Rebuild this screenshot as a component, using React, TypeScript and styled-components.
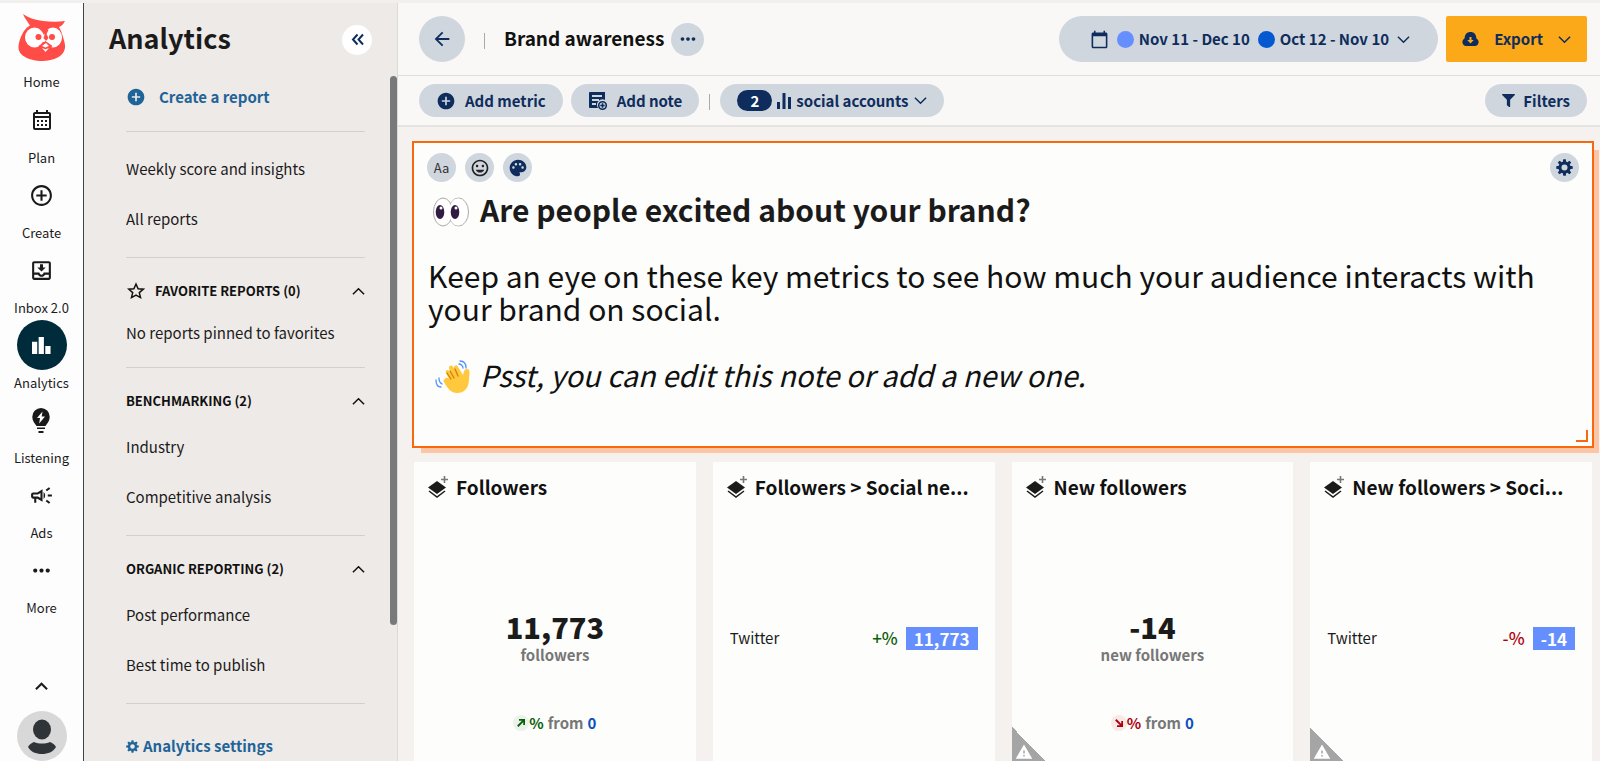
import React from "react";
import styled, { createGlobalStyle } from "styled-components";
import {
  MdOutlineCalendarMonth,
  MdOutlineAddCircleOutline,
  MdOutlineMoveToInbox,
  MdOutlineCampaign,
  MdMoreHoriz,
  MdAddCircle,
  MdPalette,
  MdOutlineInsertEmoticon,
  MdCalendarToday,
  MdArrowBack,
  MdWarning,
} from "react-icons/md";
import { FaFilter } from "react-icons/fa";

const navy = "#0f2d5c";
const pill = "#cfd6de";

const GlobalStyle = createGlobalStyle`
  *, *::before, *::after { box-sizing: border-box; }
  body {
    margin: 0;
    color: #1c1b1c;
    background: #f5f1ee;
    font-family: "Noto Sans CJK SC", "Open Sans", sans-serif;
    font-size: 15px;
    line-height: 24px;
  }
  button { font: inherit; color: inherit; border: 0; padding: 0; cursor: pointer; background: none; }
  a { color: inherit; text-decoration: none; }
  h1, h2, h3, p, ul { margin: 0; padding: 0; font-size: inherit; }
  ul { list-style: none; }
  svg { display: block; flex: none; }
`;

const Page = styled.div`
  display: flex;
  height: 100vh;
  min-height: 740px;
  overflow: hidden;
  border-top: 3px solid #f1f0ef;
`;

/* Icon rail */
const Rail = styled.nav`
  flex: none;
  display: flex;
  flex-direction: column;
  align-items: center;
  width: 84px;
  padding-top: 10px;
  background: #fdfdfd;
  border-right: 1px solid #444;
  font-size: 13px;
`;
const RailLink = styled.a`
  display: flex;
  flex-direction: column;
  align-items: center;
`;
const RailIcon = styled.span<{ $active?: boolean }>`
  display: flex;
  align-items: center;
  justify-content: center;
  width: 50px;
  height: 50px;
  border-radius: 50%;
  color: ${(p) => (p.$active ? "#fff" : "#1a1a1a")};
  background: ${(p) => (p.$active ? "#002b3a" : "transparent")};
`;
const RailLabel = styled.span`
  line-height: 25px;
`;
const HomeLabel = styled(RailLabel)`
  padding: 8px 0 1px;
`;
const RailFoot = styled.div`
  display: flex;
  flex-direction: column;
  align-items: center;
  gap: 18px;
  margin-top: 60px;
`;
const IconButton = styled.button`
  display: flex;
  align-items: center;
  justify-content: center;
`;

/* Sidebar */
const Side = styled.aside`
  position: relative;
  flex: none;
  display: flex;
  flex-direction: column;
  width: 314px;
  padding-left: 25px;
  background: #eeeae7;
  border-right: 1px solid #dcdad8;
`;
const SideHead = styled.div`
  display: flex;
  align-items: center;
  justify-content: space-between;
  height: 73px;
  padding-right: 25px;
`;
const SideTitle = styled.h1`
  padding-bottom: 4px;
  font-size: 27px;
  line-height: 36px;
`;
const Collapse = styled(IconButton)`
  width: 30px;
  height: 30px;
  border-radius: 50%;
  background: #fff;
  color: ${navy};
`;
const SideBody = styled.div`
  padding: 0 32px 0 17px;
`;
const Thumb = styled.div`
  position: absolute;
  top: 73px;
  right: 0;
  width: 7px;
  height: 549px;
  border-radius: 4px;
  background: #77797a;
`;
const CreateLink = styled.a`
  display: flex;
  align-items: center;
  gap: 13px;
  height: 55px;
  padding-bottom: 13px;
  color: #1f6498;
  font-weight: 700;
`;
const Section = styled.section`
  border-top: 1px solid #d3d0cd;
`;
const SectionHead = styled.button`
  display: flex;
  align-items: center;
  gap: 10px;
  width: 100%;
  height: 54px;
  padding-top: 12px;
  color: #111;
  font-size: 13px;
  font-weight: 700;
  text-align: left;
`;
const HeadText = styled.span`
  flex: 1;
`;
const SideItem = styled.a`
  display: flex;
  align-items: center;
  height: 50px;
`;
const TopList = styled.ul`
  padding: 12px 0 13px;
`;
const SideList = styled.ul`
  padding-bottom: 13px;
`;
const EmptyText = styled.p`
  padding: 9px 0 22px;
`;
const SettingsLink = styled.a`
  display: flex;
  align-items: center;
  gap: 4px;
  padding-top: 30px;
  color: #1f6498;
  font-weight: 700;
`;

/* Main column */
const Main = styled.main`
  flex: 1;
  min-width: 0;
  display: flex;
  flex-direction: column;
`;
const Header = styled.header`
  display: flex;
  align-items: center;
  height: 73px;
  padding: 0 13px 0 21px;
  background: #f9f8f7;
  border-bottom: 1px solid #dfdedd;
`;
const Toolbar = styled(Header)`
  height: 51px;
  border-bottom: 2px solid #e6e4e3;
`;
const Spacer = styled.div`
  flex: 1;
`;
const Round = styled(IconButton)<{ $size: number }>`
  flex: none;
  width: ${(p) => p.$size}px;
  height: ${(p) => p.$size}px;
  border-radius: 50%;
  background: ${pill};
  color: ${navy};
`;
const Rule = styled.div<{ $gap: number }>`
  width: 1px;
  height: 16px;
  margin: 3px ${(p) => p.$gap}px 0;
  background: #aba9b0;
`;
const ReportTitle = styled.h2`
  margin-right: 7px;
  padding-bottom: 2px;
  color: #111;
  font-size: 19px;
  white-space: nowrap;
`;
const Pill = styled.button<{ $gap?: number }>`
  display: flex;
  align-items: center;
  gap: ${(p) => p.$gap ?? 9}px;
  height: 33px;
  padding: 0 17px;
  border-radius: 17px;
  background: ${pill};
  color: ${navy};
  font-weight: 700;
  white-space: nowrap;
`;
const DatePill = styled(Pill)`
  height: 46px;
  padding: 0 28px 0 31px;
  border-radius: 23px;
`;
const ExportButton = styled(Pill)`
  height: 46px;
  margin-left: 8px;
  padding: 0 16px;
  border-radius: 2px;
  background: #fba919;
`;
const PillGroup = styled.div`
  display: flex;
  gap: 8px;
`;
const DateRange = styled.span`
  display: flex;
  align-items: center;
  gap: 5px;
`;
const Dot = styled.span<{ $color: string }>`
  width: 17px;
  height: 17px;
  border-radius: 50%;
  background: ${(p) => p.$color};
`;
const Count = styled.span`
  width: 35px;
  border-radius: 11px;
  background: ${navy};
  color: #fff;
  line-height: 21px;
`;

/* Dashboard */
const Board = styled.div`
  flex: 1;
  display: flex;
  flex-direction: column;
  gap: 14px;
  padding: 14px 6px 0 14px;
`;
const Note = styled.article`
  position: relative;
  height: 307px;
  padding: 10px 13px;
  border: 2px solid #f7690f;
  background: #fdfdfb;
  box-shadow: 7px 7px 0 -2px #fbc5a6;
  color: #111;
  font-size: 30px;
  line-height: 33px;
`;
const NoteTools = styled.div`
  display: flex;
  gap: 9px;
  height: 40px;
`;
const AaLabel = styled.span`
  font-size: 13px;
  line-height: 29px;
  color: #333;
`;
const NoteTitle = styled.h2`
  display: flex;
  align-items: center;
  gap: 11px;
  height: 33px;
  padding-left: 6px;
  color: #1c1b1c;
`;
const NoteText = styled.p`
  margin: 33px 0;
  padding-left: 1px;
`;
const NoteHint = styled.p`
  display: flex;
  align-items: center;
  gap: 9px;
  height: 33px;
  padding-left: 8px;
  font-size: 29px;
  font-style: italic;
`;
const Emoji = styled.span`
  padding-top: 4px;
`;
const Grip = styled.span`
  position: absolute;
  right: 4px;
  bottom: 4px;
  width: 12px;
  height: 12px;
  border: solid #f7690f;
  border-width: 0 2px 2px 0;
`;
const Cards = styled.div`
  flex: 1;
  display: grid;
  grid-template-columns: repeat(4, minmax(0, 1fr));
  gap: 17px;
  padding: 0 2px;
`;
const Card = styled.article`
  position: relative;
  padding: 12px 14px 0;
  background: #fdfdfb;
`;
const CardHead = styled.header`
  display: flex;
  align-items: center;
  gap: 8px;
  height: 26px;
`;
const CardTitle = styled.h3`
  color: #111;
  font-size: 19px;
  white-space: nowrap;
`;
const Metric = styled.div`
  display: flex;
  flex-direction: column;
  align-items: center;
  padding-top: 109px;
  color: #777;
  font-weight: 700;
`;
const Value = styled.strong`
  color: #1c1b1c;
  font-size: 29px;
  line-height: 34px;
`;
const Unit = styled.span`
  line-height: 24px;
`;
const Change = styled.div`
  display: flex;
  align-items: center;
  gap: 4px;
  margin-top: 44px;
`;
const Trend = styled.span<{ $down?: boolean }>`
  display: flex;
  align-items: center;
  color: ${(p) => (p.$down ? "#b0000f" : "#0b5f0b")};
`;
const TrendIcon = styled.span<{ $down?: boolean }>`
  display: flex;
  padding: 4px;
  border-radius: 50%;
  background: ${(p) => (p.$down ? "#f8e8e8" : "#eaf2ea")};
`;
const Base = styled.span`
  color: #0b50c0;
`;
const Row = styled.div`
  display: flex;
  align-items: center;
  gap: 8px;
  padding: 126px 3px 0;
`;
const Network = styled.span`
  flex: 1;
`;
const Percent = styled.span<{ $down?: boolean }>`
  font-size: 17px;
  font-weight: 500;
  color: ${(p) => (p.$down ? "#b0000f" : "#0b5f0b")};
`;
const Chip = styled.span`
  padding: 0 8px;
  background: #658fff;
  color: #fff;
  font-size: 17px;
  font-weight: 700;
  line-height: 23px;
`;
const Corner = styled.span`
  position: absolute;
  left: 0;
  bottom: 0;
  width: 34px;
  height: 34px;
  background: linear-gradient(45deg, #a5a5a5 50%, transparent 50%);
  color: #fff;
`;
const CornerIcon = styled(MdWarning)`
  margin: 16px 0 0 3px;
`;

/* Drawn icons */
const Chevron = ({ up, size = 13, weight = 1.6 }: { up?: boolean; size?: number; weight?: number }) => (
  <svg width={size} height={size} viewBox="0 0 14 14" fill="none" stroke="currentColor" strokeWidth={weight}>
    <path d={up ? "M1 10 7 4l6 6" : "M1 4l6 6 6-6"} />
  </svg>
);
const Owl = () => (
  <svg width="48" height="48" viewBox="0 0 48 48">
    <path
      fill="#ff4c46"
      d="M5 1c6 4 12 6 20 7 8 1 15 1 22 0-2 4-4 5-6 6 2 3 3 7 4 10 1 4 2.500 7 2 11-1 8-11 13-23 13S1 43 .5 35C.3 29 4 19 9 14.500c1-1 2-1 3-2C10 9 7 6 5 1z"
    />
    <ellipse cx="16.500" cy="24.500" rx="9.500" ry="10" fill="#fff" />
    <ellipse cx="35" cy="24.500" rx="9" ry="10" fill="#fff" />
    <path fill="#ff4c46" d="M22.500 17h8L28 22z" />
    <path fill="#fff" d="M22 22h9v7h-9z" />
    <path fill="#ff4c46" d="M27.500 19l3 6-2.500 3-2.500-3z" />
    <circle cx="20.500" cy="24" r="3" fill="#ff4c46" />
    <circle cx="34" cy="24" r="3" fill="#ff4c46" />
    <path fill="#ff4c46" d="M27.500 28l7 5-7 7-7-7z" />
    <path fill="#fff" d="M28 30l3 3-3.500 1.500L24 33zM24 35l3.500 1.200L31 35l-3.500 4z" />
  </svg>
);
const Bars = ({ size }: { size: number }) => (
  <svg width={size} height={size} viewBox="0 0 20 20" fill="currentColor">
    <path d="M0 6h5.500v13H0zM7 1h5.500v18H7zM14 10.500h5.500V19H14z" />
  </svg>
);
const ThinBars = () => (
  <svg width="14" height="16" viewBox="0 0 14 16" fill="currentColor">
    <path d="M0 9h3v7H0zM5.500 0h3v16h-3zM11 4h3v12h-3z" />
  </svg>
);
const Bulb = () => (
  <svg width="18" height="25" viewBox="0 0 18 25">
    <path fill="currentColor" d="M9 0a8.700 8.700 0 0 1 8.700 8.700c0 4-2 6-4.200 9.300h-9C2.300 14.700.3 12.700.3 8.700A8.700 8.700 0 0 1 9 0zM5 19.500h8V21H5zM6.500 23h5v2h-5z" />
    <path fill="#fff" d="M10.500 3.500 5 10h3l-.8 5.500L13 8.500H9.700z" />
  </svg>
);
const Avatar = () => (
  <svg width="50" height="50" viewBox="0 0 50 50">
    <circle cx="25" cy="25" r="25" fill="#d8d8d8" />
    <ellipse cx="25" cy="18.500" rx="9" ry="10" fill="#2f3439" />
    <path fill="#2f3439" d="M17 31c5 2 11 2 16 0 3 1 5 3 6 5-3 5-8 7-14 7s-11-2-14-7c1-2 3-4 6-5z" />
  </svg>
);
const DoubleChevron = () => (
  <svg width="13" height="13" viewBox="0 0 13 13" fill="none" stroke="currentColor" strokeWidth="2">
    <path d="M6.500 1.500 2 6.500l4.500 5M12 1.500 7.500 6.500l4.500 5" />
  </svg>
);
const Star = () => (
  <svg width="19" height="18" viewBox="-1 0 19 18" fill="none" stroke="currentColor" strokeWidth="1.500">
    <path d="M9 2l2.100 4.700 5.100.5-3.900 3.400 1.200 5L9 13l-4.500 2.600 1.200-5L1.800 7.200l5.100-.5z" />
  </svg>
);
const Gear = ({ size }: { size: number }) => (
  <svg width={size} height={size} viewBox="-9 -9 18 18">
    <circle r="4.800" fill="none" stroke="currentColor" strokeWidth="3.200" />
    {[0, 45, 90, 135, 180, 225, 270, 315].map((a) => (
      <path key={a} d="M-1.900-5.500-1.300-8.700H1.300L1.900-5.500z" fill="currentColor" transform={`rotate(${a})`} />
    ))}
  </svg>
);
const NoteIcon = () => (
  <svg width="20" height="20" viewBox="-1 -1 20 20">
    <path fill="currentColor" d="M1 0h15v8a5.500 5.500 0 0 0-7 8H1a1 1 0 0 1-1-1V1a1 1 0 0 1 1-1z" />
    <path stroke={pill} strokeWidth="1.800" d="M3 4h10M3 8h7M3 12h4" />
    <circle cx="13.500" cy="13.500" r="3.800" fill={pill} stroke="currentColor" strokeWidth="1.600" />
    <path stroke="currentColor" strokeWidth="1.600" d="M13.500 11.300v4.400M11.300 13.500h4.400" />
  </svg>
);
const CloudDown = () => (
  <svg width="17" height="14" viewBox="0 0 17 14">
    <path fill="currentColor" d="M4 14a4 4 0 0 1-1.500-7.500C3 2 5 0 8.500 0s5.500 2 6 6.500A4 4 0 0 1 13 14z" />
    <path fill="#fba919" d="M7.500 5h2v3h2.300l-3.300 3.400L5.200 8h2.300z" />
  </svg>
);
const Layers = () => (
  <svg width="20" height="23" viewBox="0 0 20 23">
    <path fill="#1c1b1c" d="M9 5l9 6.500L9 18 0 11.500z" />
    <path fill="none" stroke="#1c1b1c" strokeWidth="1.500" d="M1 15l8 6 8-6" />
    <path stroke="#777" strokeWidth="1.600" d="M16.500 0v7M13 3.500h7" />
  </svg>
);
const TrendArrow = ({ down }: { down?: boolean }) => (
  <svg width="8" height="8" viewBox="0 0 10 10" fill="none" stroke="currentColor" strokeWidth="2.400">
    <path d={down ? "M1 1l7 7M9 2.500V9H2.500" : "M1 9l7-7M9 7.500V1H2.500"} />
  </svg>
);
const Eyes = () => (
  <svg width="36" height="30" viewBox="0 0 36 30" role="img" aria-label="Eyes">
    <g fill="#fff" stroke="#a9a9a9">
      <ellipse cx="25.500" cy="15" rx="10" ry="14" />
      <ellipse cx="10" cy="15" rx="9.500" ry="14" />
    </g>
    <ellipse cx="25" cy="15" rx="9" ry="13.500" fill="#fff" />
    <ellipse cx="7" cy="15" rx="4.300" ry="7" fill="#321b41" />
    <ellipse cx="22" cy="15" rx="4.300" ry="7" fill="#321b41" />
    <circle cx="8" cy="11" r="1.500" fill="#fff" />
    <circle cx="23" cy="11" r="1.500" fill="#fff" />
  </svg>
);
const Wave = () => (
  <svg width="36" height="34" viewBox="0 0 36 34" role="img" aria-label="Waving hand" fill="none" strokeLinecap="round">
    <path
      fill="#ffc83d"
      d="M10 19c1-2 3-1 4 0l-3-6c-1-3 2-4 3-2l1 1-1-4c0-3 3-3 4-1l1 1c0-3 3-4 4-1l5 8c1-3 1-6 4-6 4 0 2 6 2 10 0 8-4 14-12 14-6 0-9-4-13-11-1-1-1-2 1-3z"
    />
    <path stroke="#d67d00" strokeWidth="1.300" d="M12 13l4 6M15 11l4 7M20 9l3 7" />
    <path stroke="#5092ff" strokeWidth="1.300" d="M1 20c0 5 2 7 5 7M4 18c0 3 1 5 3 6M25 1c4 0 6 3 6 7M24 4c2 0 4 2 4 4" />
  </svg>
);

const railItems = [
  { label: "Plan", icon: <MdOutlineCalendarMonth size={24} /> },
  { label: "Create", icon: <MdOutlineAddCircleOutline size={25} /> },
  { label: "Inbox 2.0", icon: <MdOutlineMoveToInbox size={25} /> },
  { label: "Analytics", icon: <Bars size={19} />, active: true },
  { label: "Listening", icon: <Bulb /> },
  { label: "Ads", icon: <MdOutlineCampaign size={25} /> },
  { label: "More", icon: <MdMoreHoriz size={25} /> },
];

const sections = [
  { title: "BENCHMARKING (2)", items: ["Industry", "Competitive analysis"] },
  { title: "ORGANIC REPORTING (2)", items: ["Post performance", "Best time to publish"] },
];

type CardData = { title: string; value: string; unit?: string; down?: boolean };
const cards: CardData[] = [
  { title: "Followers", value: "11,773", unit: "followers" },
  { title: "Followers > Social ne...", value: "11,773" },
  { title: "New followers", value: "-14", unit: "new followers", down: true },
  { title: "New followers > Soci...", value: "-14", down: true },
];

const MetricCard = ({ title, value, unit, down }: CardData) => (
  <Card>
    <CardHead>
      <Layers />
      <CardTitle>{title}</CardTitle>
    </CardHead>
    {unit ? (
      <Metric>
        <Value>{value}</Value>
        <Unit>{unit}</Unit>
        <Change>
          <Trend $down={down}>
            <TrendIcon $down={down}>
              <TrendArrow down={down} />
            </TrendIcon>
            %
          </Trend>
          <span>from</span>
          <Base>0</Base>
        </Change>
      </Metric>
    ) : (
      <Row>
        <Network>Twitter</Network>
        <Percent $down={down}>{down ? "-%" : "+%"}</Percent>
        <Chip>{value}</Chip>
      </Row>
    )}
    {down && (
      <Corner>
        <CornerIcon size={18} />
      </Corner>
    )}
  </Card>
);

export default function App() {
  return (
    <>
      <GlobalStyle />
      <Page>
        <Rail aria-label="Main">
          <RailLink href="#home">
            <Owl />
            <HomeLabel>Home</HomeLabel>
          </RailLink>
          {railItems.map((item) => (
            <RailLink key={item.label} href="#">
              <RailIcon $active={item.active}>{item.icon}</RailIcon>
              <RailLabel>{item.label}</RailLabel>
            </RailLink>
          ))}
          <RailFoot>
            <IconButton aria-label="Collapse menu">
              <Chevron up size={13} weight={2.2} />
            </IconButton>
            <IconButton aria-label="Profile">
              <Avatar />
            </IconButton>
          </RailFoot>
        </Rail>

        <Side>
          <SideHead>
            <SideTitle>Analytics</SideTitle>
            <Collapse aria-label="Collapse sidebar">
              <DoubleChevron />
            </Collapse>
          </SideHead>
          <SideBody>
            <CreateLink href="#create">
              <MdAddCircle size={20} />
              Create a report
            </CreateLink>
            <Section>
              <TopList>
                <li><SideItem href="#weekly">Weekly score and insights</SideItem></li>
                <li><SideItem href="#all">All reports</SideItem></li>
              </TopList>
            </Section>
            <Section>
              <SectionHead>
                <Star />
                <HeadText>FAVORITE REPORTS (0)</HeadText>
                <Chevron up />
              </SectionHead>
              <EmptyText>No reports pinned to favorites</EmptyText>
            </Section>
            {sections.map((s) => (
              <Section key={s.title}>
                <SectionHead>
                  <HeadText>{s.title}</HeadText>
                  <Chevron up />
                </SectionHead>
                <SideList>
                  {s.items.map((i) => (
                    <li key={i}><SideItem href="#">{i}</SideItem></li>
                  ))}
                </SideList>
              </Section>
            ))}
            <Section>
              <SettingsLink href="#settings">
                <Gear size={13} />
                Analytics settings
              </SettingsLink>
            </Section>
          </SideBody>
          <Thumb />
        </Side>

        <Main>
          <Header>
            <Round $size={46} aria-label="Back"><MdArrowBack size={22} /></Round>
            <Rule $gap={19} />
            <ReportTitle>Brand awareness</ReportTitle>
            <Round $size={33} aria-label="More options"><MdMoreHoriz size={22} /></Round>
            <Spacer />
            <DatePill $gap={8}>
              <MdCalendarToday size={19} />
              <DateRange><Dot $color="#658fff" />Nov 11 - Dec 10</DateRange>
              <DateRange><Dot $color="#0458d0" />Oct 12 - Nov 10</DateRange>
              <Chevron />
            </DatePill>
            <ExportButton $gap={15}>
              <CloudDown />
              Export
              <Chevron />
            </ExportButton>
          </Header>
          <Toolbar as="div">
            <PillGroup>
              <Pill><MdAddCircle size={20} />Add metric</Pill>
              <Pill><NoteIcon />Add note</Pill>
            </PillGroup>
            <Rule $gap={10} />
            <Pill $gap={5}>
              <Count>2</Count>
              <ThinBars />
              social accounts
              <Chevron />
            </Pill>
            <Spacer />
            <Pill $gap={8}><FaFilter size={13} />Filters</Pill>
          </Toolbar>

          <Board>
            <Note>
              <NoteTools>
                <Round $size={29} aria-label="Text style"><AaLabel>Aa</AaLabel></Round>
                <Round $size={29} aria-label="Emoji"><MdOutlineInsertEmoticon size={20} color="#222" /></Round>
                <Round $size={29} aria-label="Color"><MdPalette size={20} /></Round>
                <Spacer />
                <Round $size={29} aria-label="Note settings"><Gear size={17} /></Round>
              </NoteTools>
              <NoteTitle><Emoji><Eyes /></Emoji>Are people excited about your brand?</NoteTitle>
              <NoteText>
                Keep an eye on these key metrics to see how much your audience interacts with your brand on social.
              </NoteText>
              <NoteHint><Emoji><Wave /></Emoji>Psst, you can edit this note or add a new one.</NoteHint>
              <Grip />
            </Note>
            <Cards>
              {cards.map((c) => (
                <MetricCard key={c.title} {...c} />
              ))}
            </Cards>
          </Board>
        </Main>
      </Page>
    </>
  );
}
